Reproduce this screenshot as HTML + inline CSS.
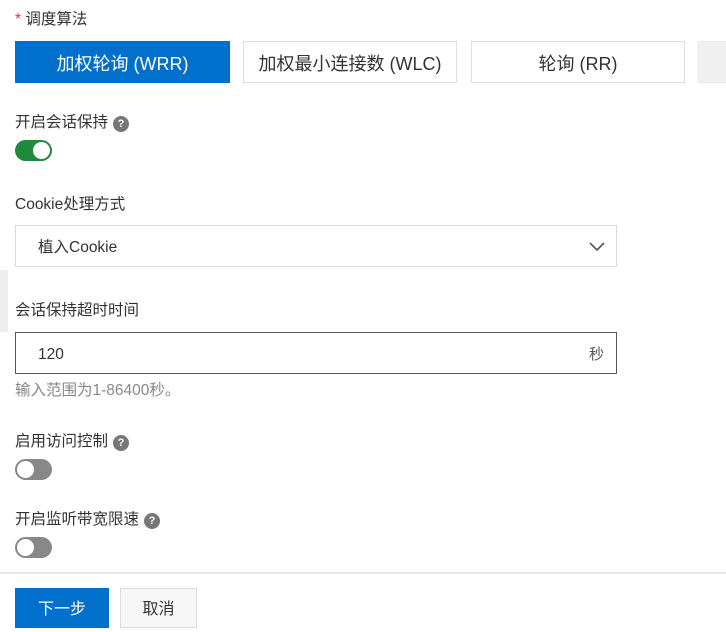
<!DOCTYPE html>
<html><head><meta charset="utf-8"><style>
body{margin:0;width:726px;height:619px;overflow:hidden;background:#fff;font-family:"Liberation Sans","Noto Sans CJK SC",sans-serif;color:#333;position:relative}
.a{position:absolute}
.lbl{font-size:15.5px;color:#333;line-height:20px}
.q{display:inline-block;width:16px;height:16px;border-radius:50%;background:#777;color:#fff;font-size:11px;font-weight:bold;text-align:center;line-height:16px;vertical-align:0px;margin-left:5px}
.btn{position:absolute;top:41px;height:42px;box-sizing:border-box;border:1px solid #ddd;background:#fff;font-size:18px;text-align:center;line-height:44px;color:#333}
.tg{position:absolute;left:15px;width:37px;height:21px;border-radius:11px;background:#888}
.tg i{position:absolute;top:2px;width:17px;height:17px;border-radius:50%;background:#fff}
.box{position:absolute;left:15px;width:602px;height:42px;box-sizing:border-box;font-size:15.5px;line-height:43px;padding-left:22px}
</style></head><body>
<div class="a lbl" style="left:15px;top:10px"><span style="color:#d9363e">*</span> 调度算法</div>
<div class="btn" style="left:15px;width:215px;background:#0070cc;border-color:#0070cc;color:#fff">加权轮询 (WRR)</div>
<div class="btn" style="left:243px;width:214px">加权最小连接数 (WLC)</div>
<div class="btn" style="left:471px;width:214px">轮询 (RR)</div>
<div class="btn" style="left:698px;width:40px;background:#f0f0f0;border-color:#e8e8e8"></div>
<div class="a lbl" style="left:15px;top:113px">开启会话保持<span class="q">?</span></div>
<div class="tg" style="top:140px;background:#1e8a3c"><i style="left:18px"></i></div>
<div class="a lbl" style="left:15px;top:195px">Cookie处理方式</div>
<div class="box" style="top:225px;border:1px solid #d9d9d9">植入Cookie
<svg class="a" style="right:10px;top:14px" width="18" height="12" viewBox="0 0 18 12"><path d="M2 3l7 7 7-7" fill="none" stroke="#555" stroke-width="1.6"/></svg></div>
<div class="a" style="left:0;top:270px;width:8px;height:62px;background:#eee"></div>
<div class="a lbl" style="left:15px;top:301px">会话保持超时时间</div>
<div class="box" style="top:332px;border:1px solid #555">120<span class="a" style="right:12px;top:0;font-size:15px;color:#555">秒</span></div>
<div class="a lbl" style="left:15px;top:381px;color:#888">输入范围为1-86400秒。</div>
<div class="a lbl" style="left:15px;top:432px">启用访问控制<span class="q">?</span></div>
<div class="tg" style="top:459px"><i style="left:2px"></i></div>
<div class="a lbl" style="left:15px;top:510px">开启监听带宽限速<span class="q">?</span></div>
<div class="tg" style="top:537px"><i style="left:2px"></i></div>
<div class="a" style="left:0;top:572px;width:726px;height:2px;background:#e6e6e6"></div>
<div class="a" style="left:15px;top:588px;width:94px;height:40px;background:#0070cc;color:#fff;font-size:16px;text-align:center;line-height:44px">下一步</div>
<div class="a" style="left:120px;top:588px;width:77px;height:40px;box-sizing:border-box;border:1px solid #ddd;background:#f7f7f7;font-size:16px;text-align:center;line-height:42px">取消</div>
</body></html>
